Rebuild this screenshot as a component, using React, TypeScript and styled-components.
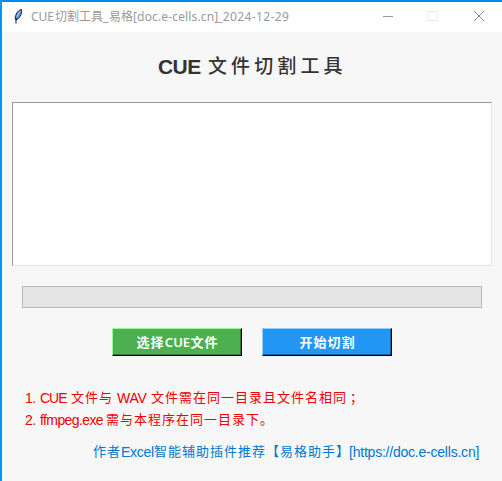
import React from "react";
import styled, { createGlobalStyle } from "styled-components";

const Global = createGlobalStyle`
  * { box-sizing: border-box; }
  body { margin: 0; background: #f7f7f7; }
`;

const Window = styled.div`
  width: 502px;
  height: 481px;
  overflow: hidden;
  display: flex;
  flex-direction: column;
  background: #f7f7f7;
  border-left: 2px solid #0097f0;
  border-top: 2px solid #0087ee;
  font-family: "Liberation Sans", "Noto Sans CJK SC", sans-serif;
`;

const TitleBar = styled.header`
  height: 30px;
  flex: none;
  display: flex;
  align-items: center;
  background: #fff;
  padding-left: 9px;
`;

const TitleText = styled.div`
  flex: 1;
  display: flex;
  margin-left: 6px;
  color: #999;
  font: 12px/28px "Noto Sans", "Noto Sans CJK SC", sans-serif;
`;

const Controls = styled.div`
  display: flex;
  margin-right: 1px;
  svg { display: block; width: 45.5px; height: 30px; }
`;

const Run = styled.span<{ $w: number; $ls?: number; $size?: number }>`
  flex: none;
  display: block;
  width: ${(p) => p.$w}px;
  letter-spacing: ${(p) => p.$ls ?? 0}px;
  ${(p) => p.$size && `font-size: ${p.$size}px;`}
  white-space: pre;
`;

const Heading = styled.h1`
  display: flex;
  height: 70px;
  margin: 0;
  padding-left: 156px;
  color: #333;
  font-size: 21px;
  font-weight: 700;
  line-height: 70px;
`;

const HeadingCjk = styled(Run)`
  font-weight: 500;
`;

const FileList = styled.div`
  height: 164px;
  margin: 0 10px;
  background: #fff;
  border: 1px solid;
  border-color: #999 #e3e3e3 #e3e3e3 #999;
`;

const Progress = styled.div`
  height: 22px;
  margin: 20px 20px 0;
  background: #e5e5e5;
  border: 1px solid #b9b9b9;
`;

const Actions = styled.div`
  display: flex;
  gap: 20px;
  margin: 20px 0 0 110px;
`;

const Button = styled.button<{ $bg: string; $light: string; $dark: string }>`
  display: flex;
  justify-content: center;
  width: 130px;
  height: 28px;
  padding: 0;
  border: 1px solid;
  border-color: ${(p) => `${p.$light} #000 #000 ${p.$light}`};
  box-shadow: inset -1px -1px ${(p) => p.$dark};
  background: ${(p) => p.$bg};
  color: #fff;
  font: 700 13px/26px "Noto Sans", "Noto Sans CJK SC", sans-serif;
`;

const ButtonLatin = styled(Run)`
  font-weight: 600;
`;

const Notes = styled.div`
  margin: 31px 0 0 23px;
  color: #f00000;
`;

const Line = styled.div`
  display: flex;
  height: 22px;
  font-size: 13px;
  line-height: 22px;
`;

const Footer = styled(Line)`
  margin: 10px 0 0 91px;
  color: #0078d0;
`;

const Feather = () => (
  <svg width="14" height="18" viewBox="0 0 14 18">
    <path d="M10.5 1.5C8 1.5 5 5 4.2 9.2L4.8 12L7.2 10.8C9.6 8.6 11.3 4 10.5 1.5Z" fill="#5b93dc" stroke="#20252d" strokeWidth="1" />
    <path d="M9 3.5L6 8.5" stroke="#a9d0ff" strokeWidth="1" />
    <path d="M5.6 10.5L5 12.5V15.5" fill="none" stroke="#111" strokeWidth="1" />
  </svg>
);

export default function App() {
  return (
    <>
      <Global />
      <Window>
        <TitleBar>
          <Feather />
          <TitleText>
            <Run $w={24}>CUE</Run>
            <Run $w={48}>切割工具</Run>
            <Run $w={6}>_</Run>
            <Run $w={24}>易格</Run>
            <Run $w={84} $ls={0.15}>[doc.e-cells.cn]</Run>
            <Run $w={75} $ls={0.4}>_2024-12-29</Run>
          </TitleText>
          <Controls>
            <svg viewBox="0 0 45.5 30"><path d="M18 14.5h10" stroke="#999" /></svg>
            <svg viewBox="0 0 45.5 30"><rect x="18" y="9.5" width="9" height="9" fill="none" stroke="#e8e8e8" /></svg>
            <svg viewBox="0 0 45.5 30"><path d="M18 9l10 10M28 9l-10 10" stroke="#888" /></svg>
          </Controls>
        </TitleBar>
        <Heading>
          <Run $w={50} $ls={-0.6}>CUE</Run>
          <HeadingCjk $w={140} $ls={4.1} $size={19}>文件切割工具</HeadingCjk>
        </Heading>
        <FileList />
        <Progress />
        <Actions>
          <Button $bg="#4caf50" $light="#9df2a2" $dark="#2f7d32">
            <Run $w={28} $ls={1}>选择</Run>
            <ButtonLatin $w={26}>CUE</ButtonLatin>
            <Run $w={27} $ls={1}>文件</Run>
          </Button>
          <Button $bg="#2196f3" $light="#8fd0ff" $dark="#1263a8">
            <Run $w={55} $ls={1}>开始切割</Run>
          </Button>
        </Actions>
        <Notes>
          <Line>
            <Run $w={15} $size={14} $ls={-0.5}>1.</Run>
            <Run $w={31} $size={14} $ls={-1}>CUE</Run>
            <Run $w={46} $ls={1}>文件与</Run>
            <Run $w={34} $size={14} $ls={-0.2}>WAV</Run>
            <Run $w={199} $ls={1}>文件需在同一目录且文件名相同</Run>
            <Run $w={14}>；</Run>
          </Line>
          <Line>
            <Run $w={15} $size={14} $ls={-0.5}>2.</Run>
            <Run $w={66} $size={14} $ls={-0.6}>ffmpeg.exe</Run>
            <Run $w={170} $ls={1}>需与本程序在同一目录下。</Run>
          </Line>
        </Notes>
        <Footer>
          <Run $w={28} $ls={1}>作者</Run>
          <Run $w={33} $size={14} $ls={-0.25}>Excel</Run>
          <Run $w={112} $ls={1}>智能辅助插件推荐</Run>
          <Run $w={14} $ls={1}>【</Run>
          <Run $w={56} $ls={1}>易格助手</Run>
          <Run $w={13}>】</Run>
          <Run $w={132} $size={14} $ls={-0.22}>[https://doc.e-cells.cn]</Run>
        </Footer>
      </Window>
    </>
  );
}
